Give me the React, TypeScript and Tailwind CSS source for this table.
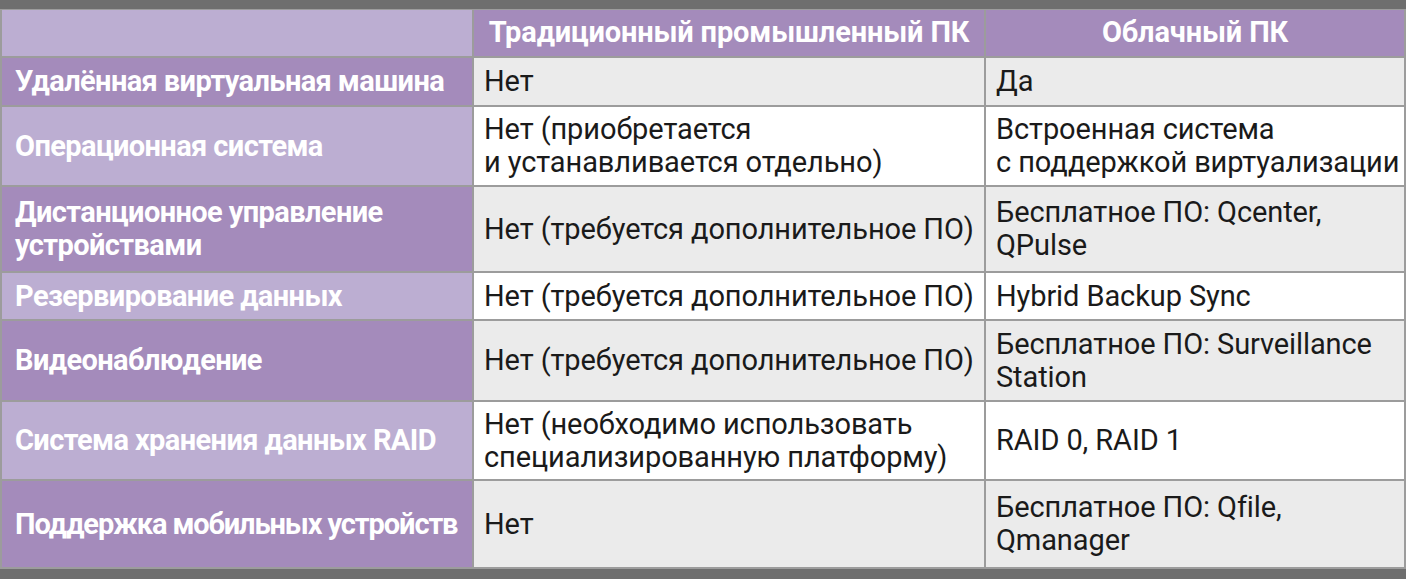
import React from "react";

type Row = { label: string[]; a: string[]; b: string[]; h: string; dark: boolean; tr: string };

const rows: Row[] = [
  { label: ["Удалённая виртуальная машина"], a: ["Нет"], b: ["Да"], h: "h-[47px]", dark: true, tr: "tracking-[-0.6px]" },
  { label: ["Операционная система"], a: ["Нет (приобретается", "и устанавливается отдельно)"], b: ["Встроенная система", "с поддержкой виртуализации"], h: "h-[78px]", dark: false, tr: "tracking-[-0.6px]" },
  { label: ["Дистанционное управление", "устройствами"], a: ["Нет (требуется дополнительное ПО)"], b: ["Бесплатное ПО: Qcenter,", "QPulse"], h: "h-[84px]", dark: true, tr: "tracking-[-0.6px]" },
  { label: ["Резервирование данных"], a: ["Нет (требуется дополнительное ПО)"], b: ["Hybrid Backup Sync"], h: "h-[46px]", dark: false, tr: "tracking-[-0.6px]" },
  { label: ["Видеонаблюдение"], a: ["Нет (требуется дополнительное ПО)"], b: ["Бесплатное ПО: Surveillance", "Station"], h: "h-[79px]", dark: true, tr: "tracking-[-0.6px]" },
  { label: ["Система хранения данных RAID"], a: ["Нет (необходимо использовать", "специализированную платформу)"], b: ["RAID 0, RAID 1"], h: "h-[77px]", dark: false, tr: "tracking-[-0.6px]" },
  { label: ["Поддержка мобильных устройств"], a: ["Нет"], b: ["Бесплатное ПО: Qfile,", "Qmanager"], h: "h-[86px]", dark: true, tr: "tracking-[-1.1px]" },
];

const font = { fontFamily: "Roboto, 'Noto Sans', sans-serif" };

function Lines({ lines }: { lines: string[] }) {
  return (
    <div className="leading-[33px]">
      {lines.map((l, i) => (
        <div key={i} className="whitespace-nowrap">{l}</div>
      ))}
    </div>
  );
}

export default function App() {
  return (
    <div className="w-[1409px] h-[579px] bg-white" style={font}>
      <div className="w-[1406px]">
        <div className="h-[9px] bg-[#6e6e6e]" />
        <div className="grid grid-cols-[470px_510px_418px] gap-[2px] bg-[#9c9c9c] pt-[1px] pb-[2px] px-[2px]">
          <div className="h-[46px] bg-[#bcaed2]" />
          <div className="h-[46px] bg-[#a48bbb] flex items-center justify-center text-white font-bold text-[29px] tracking-[-0.15px]">
            Традиционный промышленный ПК
          </div>
          <div className="h-[46px] bg-[#a48bbb] flex items-center justify-center text-white font-bold text-[29px] tracking-[-0.15px]">
            Облачный ПК
          </div>
          {rows.map((r, i) => (
            <React.Fragment key={i}>
              <div
                className={`${r.h} ${r.dark ? "bg-[#a48bbb]" : "bg-[#bcaed2]"} ${r.tr} flex items-center pl-[13px] text-white font-bold text-[29px]`}
              >
                <Lines lines={r.label} />
              </div>
              <div
                className={`${r.h} ${r.dark ? "bg-[#ebebeb]" : "bg-white"} flex items-center pl-[10px] text-[#1a1a1a] text-[29px] tracking-[-0.1px]`}
              >
                <Lines lines={r.a} />
              </div>
              <div
                className={`${r.h} ${r.dark ? "bg-[#ebebeb]" : "bg-white"} flex items-center pl-[10px] text-[#1a1a1a] text-[29px] tracking-[-0.1px]`}
              >
                <Lines lines={r.b} />
              </div>
            </React.Fragment>
          ))}
        </div>
        <div className="h-[10px] bg-[#6e6e6e]" />
      </div>
    </div>
  );
}
